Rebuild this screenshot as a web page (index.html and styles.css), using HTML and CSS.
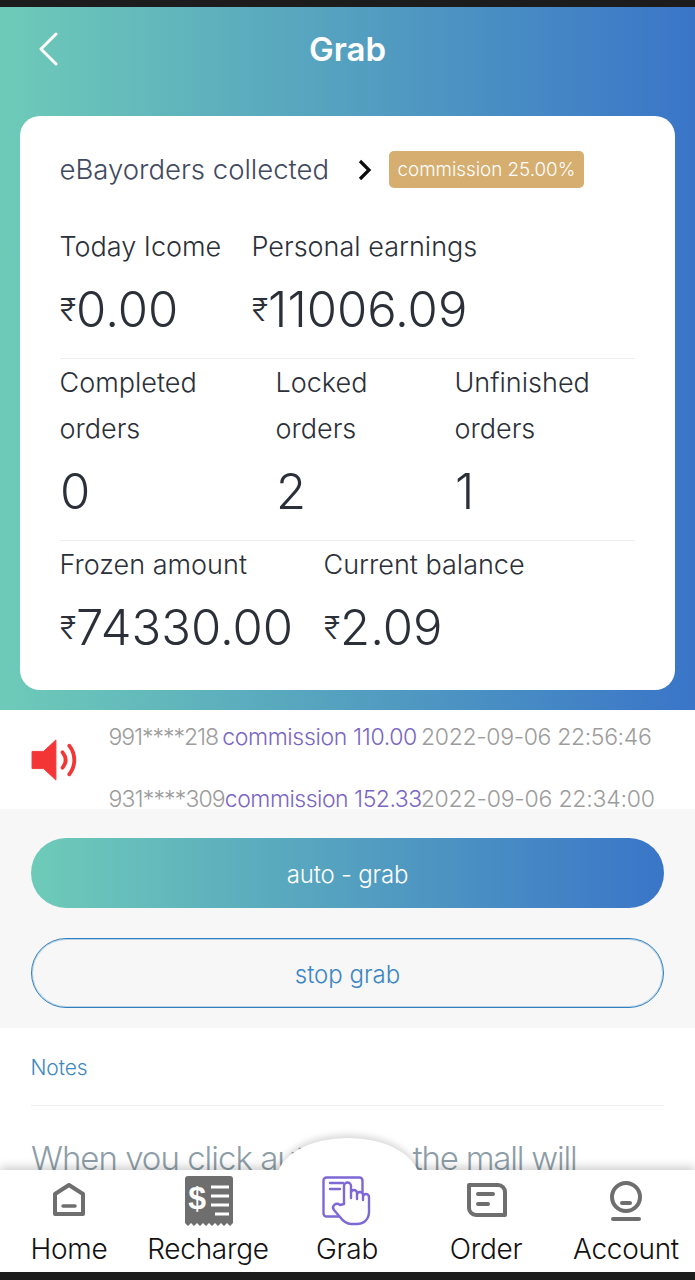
FILE: index.html
```html
<!DOCTYPE html>
<html lang="en">
<head>
<meta charset="utf-8">
<title>Grab</title>
<link rel="stylesheet" href="styles.css">
</head>
<body>
<div class="statusbar"></div>
<div class="phone">
  <section class="hero">
    <header class="topbar">
      <svg class="back" viewBox="0 0 22 34" width="22" height="34"><path d="M18 2 3 17l15 15" fill="none" stroke="#fff" stroke-width="3" stroke-linecap="round" stroke-linejoin="round"/></svg>
      <h1 class="title">Grab</h1>
    </header>
    <div class="card">
      <div class="card-head">
        <span class="shop">eBayorders collected</span>
        <svg class="chev" viewBox="0 0 14 22" width="14" height="22"><path d="M2 2l9 9-9 9" fill="none" stroke="#0b0b0b" stroke-width="3.2"/></svg>
        <span class="badge">commission 25.00%</span>
      </div>
      <div class="row row-a">
        <div class="stat s-today"><div class="label">Today Icome</div><div class="value"><span class="rs">₹</span>0.00</div></div>
        <div class="stat"><div class="label">Personal earnings</div><div class="value"><span class="rs">₹</span>11006.09</div></div>
      </div>
      <div class="row row-b">
        <div class="stat s-completed"><div class="label">Completed orders</div><div class="value">0</div></div>
        <div class="stat s-locked"><div class="label">Locked orders</div><div class="value">2</div></div>
        <div class="stat s-unfinished"><div class="label">Unfinished orders</div><div class="value">1</div></div>
      </div>
      <div class="row row-c">
        <div class="stat s-frozen"><div class="label">Frozen amount</div><div class="value"><span class="rs">₹</span>74330.00</div></div>
        <div class="stat"><div class="label">Current balance</div><div class="value"><span class="rs">₹</span>2.09</div></div>
      </div>
    </div>
  </section>
  <section class="ticker">
    <svg class="speaker" viewBox="0 0 48 44" width="48" height="44"><path d="M1 13h12L26 1v42L13 31H1z" fill="#f43535" stroke="#f43535" stroke-linejoin="round"/><path d="M33 14c4 5 4 11 0 16M40 7c7 9 7 21 0 30" fill="none" stroke="#f43535" stroke-width="4" stroke-linecap="round"/></svg>
    <div class="lines">
      <p class="line line-one"><span class="phone-no">991****218</span> <em>commission 110.00</em> 2022-09-06 22:56:46</p>
      <p class="line line-two"><span class="phone-no">931****309</span><em>commission 152.33</em><span class="when">2022-09-06 22:34:00</span></p>
    </div>
  </section>
  <section class="actions">
    <button class="btn btn-fill">auto - grab</button>
    <button class="btn btn-line">stop grab</button>
  </section>
  <section class="notes">
    <h2 class="notes-title">Notes</h2>
    <p class="notes-text">When you click au<span class="tucked">to-grab, </span><span class="tail">the mall will</span></p>
  </section>
</div>
<nav class="tabbar">
  <div class="hump"></div>
  <a class="tab tab-home">
    <svg viewBox="0 0 34 36" width="34" height="36"><path d="M3 12 17 3l14 9v20H3z" fill="none" stroke="#6e6e6e" stroke-width="4" stroke-linejoin="round"/><path d="M11 24h12" stroke="#6e6e6e" stroke-width="3.5" stroke-linecap="round"/></svg>
    <span>Home</span>
  </a>
  <a class="tab tab-recharge">
    <svg viewBox="0 0 50 50" width="50" height="50"><path d="M3 0h44a3 3 0 0 1 3 3v44l-3 3-3-3-3 3-3-3-3 3-3-3-3 3-3-3-3 3-3-3-3 3-3-3-3 3-3-3-3 3-3-3V3a3 3 0 0 1 3-3z" fill="#6e6e6e"/><path d="M28 11h18M28 20h18M28 29h18M32 38h14" stroke="#fff" stroke-width="3"/><text class="dollar" x="14" y="33" text-anchor="middle">$</text></svg>
    <span>Recharge</span>
  </a>
  <a class="tab tab-grab">
    <svg viewBox="0 0 50 50" width="50" height="50" fill="none" stroke="#7d68d6" stroke-width="2.4" stroke-linecap="round" stroke-linejoin="round"><rect x="1.500" y="1.500" width="39" height="39" rx="3"/><path d="M8 7h13M8 13h10"/><path d="M22 28V10a3.500 3.500 0 0 1 7 0v12-5a3 3 0 0 1 6 0v6-4a3 3 0 0 1 6 0v5-3a3 3 0 0 1 6 0v15c0 7-5 12-12 12h-6c-5 0-8-3-11-7l-6-7c-3-4 2-8 6-5z" fill="#fff"/></svg>
    <span>Grab</span>
  </a>
  <a class="tab tab-order">
    <svg viewBox="0 0 42 36" width="42" height="36"><path d="M6 3h26a7 7 0 0 1 7 7v23H10a7 7 0 0 1-7-7V3z" fill="none" stroke="#6e6e6e" stroke-width="4" stroke-linejoin="round"/><path d="M12 12h15M12 22h10" stroke="#6e6e6e" stroke-width="4" stroke-linecap="round"/></svg>
    <span>Order</span>
  </a>
  <a class="tab tab-account">
    <svg viewBox="0 0 36 42" width="36" height="42"><circle cx="18" cy="16" r="14" fill="none" stroke="#6e6e6e" stroke-width="4"/><path d="M14 22h8" stroke="#6e6e6e" stroke-width="4" stroke-linecap="round"/><path d="M5 38h26" stroke="#6e6e6e" stroke-width="4" stroke-linecap="round"/></svg>
    <span>Account</span>
  </a>
</nav>
<div class="navbar"></div>
</body>
</html>
```
FILE: styles.css
```css
* { box-sizing: border-box; }
html, body { margin: 0; padding: 0; }
body { width: 695px; height: 1280px; position: relative; overflow: hidden; background: #fff; font-family: Inter, "Liberation Sans", sans-serif; font-weight: 300; color: #2b2f38; }
.statusbar { height: 7px; background: #1c1c1c; }
.phone { height: 1163px; overflow: hidden; }
.hero { height: 703px; padding: 0 20px; background: linear-gradient(90deg, #6ecbb8, #3a75c8); }
.topbar { height: 109px; position: relative; display: flex; justify-content: center; padding-top: 21px; }
.back { position: absolute; left: 18px; top: 25px; }
.title { margin: 0; color: #fff; font-size: 33px; line-height: 42px; font-weight: 600; }
.card { height: 574px; background: #fff; border-radius: 20px; padding: 0 40px; }
.card-head { height: 107px; display: flex; align-items: center; }
.shop { font-size: 27.5px; color: #3f4a60; width: 298px; margin: -2px 0 0 -0.5px; white-space: nowrap; }
.chev { margin-right: 17px; }
.badge { background: #d5ae70; color: #fff; font-size: 18.8px; height: 37px; line-height: 37px; padding: 0 9px; border-radius: 5px; white-space: nowrap; }
.row { display: flex; padding-top: 1px; }
.label { font-size: 27px; line-height: 46px; margin-left: -0.5px; }
.value { font-size: 49px; line-height: 62px; padding-top: 9px; white-space: nowrap; }
.rs { font-size: 31px; line-height: 1; vertical-align: 6px; }
.row-a { height: 136px; border-bottom: 1px solid #eee; }
.s-today { width: 192px; }
.row-b { height: 182px; border-bottom: 1px solid #eee; }
.s-completed { width: 216px; }
.s-locked { width: 179px; }
.s-unfinished { width: 180px; }
.row-b .label { width: 170px; }
.row-c .s-frozen { width: 264px; }
.ticker { height: 99px; display: flex; align-items: center; padding-left: 31px; }
.speaker { flex: none; width: 46px; height: 42px; }
.lines { margin-left: 31.5px; margin-top: 16px; }
.line { margin: 0; font-size: 23px; line-height: 22px; color: #9c9c9c; white-space: nowrap; letter-spacing: -0.35px; }
.line em { font-style: normal; color: #7a66c4; }
.line-one .phone-no { letter-spacing: -1.05px; }
.line-one em { margin: 0 -2px; }
.line-two { margin-top: 40px; }
.line-two .phone-no { letter-spacing: -0.85px; }
.line-two em { letter-spacing: -0.5px; }
.line-two .when { letter-spacing: -0.2px; margin-left: -1px; }
.actions { height: 219px; background: #f7f7f7; padding: 29px 31px 0; display: flex; flex-direction: column; gap: 30px; }
.btn { height: 70px; border-radius: 35px; font: inherit; font-size: 24px; cursor: pointer; padding: 2px 0 0; }
.btn-fill { border: 0; color: #fff; letter-spacing: -0.2px; background: linear-gradient(90deg, #6ecbb8, #3a75c8); }
.btn-line { border: 1px solid #2f80c0; box-shadow: inset 0 0 0 1px rgba(47,128,192,.3); background: transparent; color: #3b86c4; padding-top: 3px; }
.notes { padding: 0 31px; }
.notes-title { margin: 0; height: 78px; border-bottom: 1px solid #eee; font-size: 21px; font-weight: 300; color: #3d87c0; line-height: 80px; letter-spacing: -0.1px; text-indent: -0.5px; }
.notes-text { margin: 29px 0 0; font-size: 33px; line-height: 46px; color: #8e9ea8; white-space: nowrap; letter-spacing: -1px; }
.tucked { letter-spacing: -1.7px; }
.tail { letter-spacing: -1.2px; }
.tabbar { position: absolute; left: 0; top: 1170px; width: 695px; height: 102px; background: #fff; display: flex; box-shadow: 0 -3px 9px rgba(0,0,0,.2); }
.hump { position: absolute; left: 277px; top: -32px; width: 142px; height: 82px; border-radius: 50%; background: #fff; box-shadow: 0 -3px 7px rgba(0,0,0,.16); clip-path: inset(-12px -12px 50px -12px); }
.tab { position: absolute; top: 0; height: 102px; display: flex; flex-direction: column; align-items: center; color: #111; font-size: 28px; letter-spacing: -0.3px; white-space: nowrap; }
.tab span { position: absolute; top: 61px; line-height: 36px; }
.tab svg { position: absolute; }
.tab-home { left: 69px; }
.tab-home svg { top: 12px; left: -17px; }
.tab-recharge { left: 208px; }
.tab-recharge svg { top: 6px; left: -25px; }
.tab-grab { left: 347px; }
.tab-grab svg { top: 6px; left: -25px; }
.tab-order { left: 486px; }
.tab-order svg { top: 12px; left: -20px; }
.tab-account { left: 626px; }
.tab-account svg { top: 11px; left: -18px; }
.dollar { font: 700 32px "Liberation Sans", sans-serif; fill: #fff; }
.navbar { position: absolute; left: 0; top: 1272px; width: 695px; height: 8px; background: #1c1c1c; }
```
